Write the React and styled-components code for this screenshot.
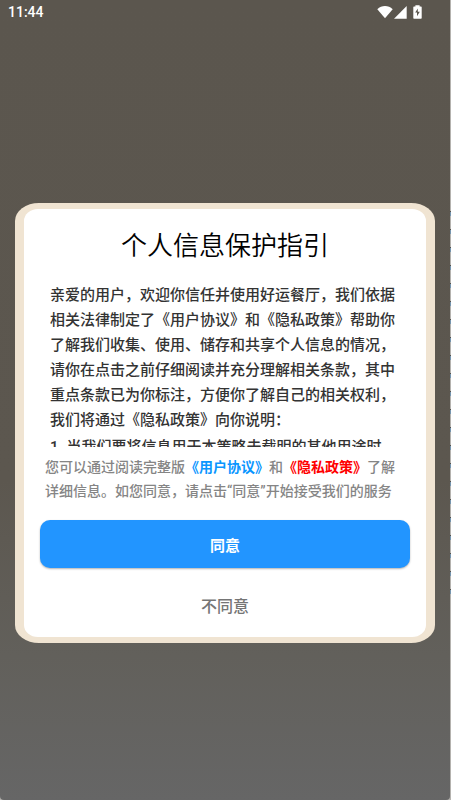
import styled, { createGlobalStyle } from "styled-components";

const GlobalStyle = createGlobalStyle`
  * {
    box-sizing: border-box;
  }
  body {
    margin: 0;
    background: #b4b2ae;
    font-family: Roboto, "Noto Sans CJK SC", sans-serif;
  }
`;

const Page = styled.div`
  min-height: 100vh;
  display: flex;
  flex-direction: column;
  padding-right: 1px;
  background:
    repeating-linear-gradient(#b4b2ae 0 11px, #53504b 11px 12px, #7594ad 12px 16px, #b4b2ae 16px 18px)
    right 200px / 1px 50% no-repeat #b4b2ae;
`;

const Screen = styled.div`
  flex: 1;
  display: flex;
  flex-direction: column;
  border-radius: 0 0 4px 4px;
  background: linear-gradient(#5b564e 0%, #5c574f 60%, #62605b 82%, #666666 100%);
`;

const StatusBar = styled.header`
  height: 24px;
  padding: 0 28px 0 8px;
  display: flex;
  align-items: center;
  justify-content: space-between;
  color: #ffffff;
`;

const Time = styled.time`
  font-size: 14px;
  font-weight: 500;
`;

const StatusIcons = styled.div`
  display: flex;
  align-items: center;

  svg {
    display: block;
    fill: #ffffff;
  }
  svg + svg {
    margin-left: 1px;
  }
  svg:last-child {
    margin-left: 6px;
  }
`;

const Main = styled.main`
  flex: 1;
  display: flex;
  align-items: center;
  padding: 22px 15px 0;
`;

const Dialog = styled.section`
  width: 100%;
  padding: 6px 9px;
  background: #f0e4d2;
  border-radius: 24px / 18px;
`;

const DialogInner = styled.div`
  padding: 17px 16px 8px;
  background: #ffffff;
  border-radius: 14px / 12px;
`;

const Title = styled.h1`
  margin: 0;
  font-size: 26px;
  font-weight: 350;
  line-height: 40px;
  text-align: center;
  color: #000000;
`;

const Terms = styled.div`
  height: 164px;
  margin: 17px 10px 0;
  overflow: hidden;
  font-size: 15px;
  font-weight: 500;
  line-height: 25px;
  color: #333333;

  p {
    margin: 0 0 2px;
  }
`;

const Summary = styled.p`
  margin: 8px 5px 0;
  font-size: 14px;
  font-weight: 500;
  line-height: 24px;
  color: #858585;
`;

const PolicyLink = styled.a`
  font-weight: 700;
  text-decoration: none;
  color: ${(props) => props.$color};
`;

const Actions = styled.div`
  margin-top: 17px;
  display: flex;
  flex-direction: column;
  gap: 13px;
`;

const Button = styled.button`
  height: 48px;
  border: 0;
  border-radius: 10px;
  font-family: inherit;
  font-size: ${(props) => (props.$primary ? "15px" : "16px")};
  font-weight: ${(props) => (props.$primary ? 700 : 500)};
  color: ${(props) => (props.$primary ? "#ffffff" : "#757575")};
  background: ${(props) => (props.$primary ? "#2295ff" : "transparent")};
  box-shadow: ${(props) => (props.$primary ? "0 1px 2px rgba(0, 0, 0, 0.3)" : "none")};
  cursor: pointer;
`;

function WifiIcon() {
  return (
    <svg width="16" height="14" viewBox="0 0 16 14" aria-hidden="true">
      <path d="M0.3 4.2C4.6 0 11.4 0 15.7 4.2L8 13.3z" />
    </svg>
  );
}

function SignalIcon() {
  return (
    <svg width="13" height="13" viewBox="0 0 13 13" aria-hidden="true">
      <path d="M12.7 0v12.7H0z" />
    </svg>
  );
}

function BatteryIcon() {
  return (
    <svg width="9" height="14" viewBox="0 0 9 14" aria-hidden="true">
      <path
        fillRule="evenodd"
        d="M2.4 0.3h4.2v1.2h1.4q0.7 0 0.7 0.7v10.8q0 0.7-0.7 0.7H1q-0.7 0-0.7-0.7V2.2q0-0.7 0.7-0.7h1.4zM4.8 3.4L2.2 7.6H4v3.6L6.8 6.8H4.8z"
      />
    </svg>
  );
}

export default function App() {
  return (
    <>
      <GlobalStyle />
      <Page>
        <Screen>
          <StatusBar>
            <Time>11:44</Time>
            <StatusIcons>
              <WifiIcon />
              <SignalIcon />
              <BatteryIcon />
            </StatusIcons>
          </StatusBar>
          <Main>
            <Dialog role="dialog" aria-labelledby="dialog-title">
              <DialogInner>
                <Title id="dialog-title">个人信息保护指引</Title>
                <Terms>
                  <p>
                    亲爱的用户，欢迎你信任并使用好运餐厅，我们依据相关法律制定了《用户协议》和《隐私政策》帮助你了解我们收集、使用、储存和共享个人信息的情况，请你在点击之前仔细阅读并充分理解相关条款，其中重点条款已为你标注，方便你了解自己的相关权利，我们将通过《隐私政策》向你说明：
                  </p>
                  <p>1. 当我们要将信息用于本策略未载明的其他用途时，</p>
                </Terms>
                <Summary>
                  您可以通过阅读完整版
                  <PolicyLink href="#agreement" $color="#0a96ff">《用户协议》</PolicyLink>
                  和
                  <PolicyLink href="#privacy" $color="#ff0000">《隐私政策》</PolicyLink>
                  了解详细信息。如您同意，请点击“同意”开始接受我们的服务
                </Summary>
                <Actions>
                  <Button type="button" $primary>同意</Button>
                  <Button type="button">不同意</Button>
                </Actions>
              </DialogInner>
            </Dialog>
          </Main>
        </Screen>
      </Page>
    </>
  );
}
